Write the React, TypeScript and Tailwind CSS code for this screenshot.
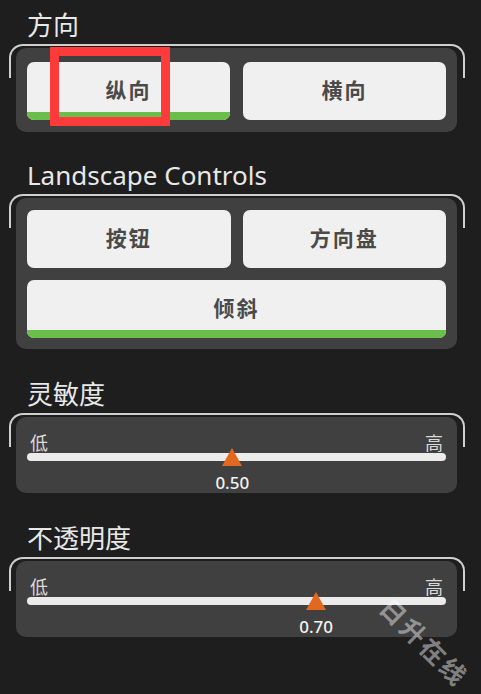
import React from 'react';

const cjk = { fontFamily: '"Noto Sans", "Noto Sans CJK SC", sans-serif' };

const Bracket = ({ children }: { children: React.ReactNode }) => (
  <div className="relative ml-[9px] w-[456px] pt-[4px] pl-[7px] pr-[8px]">
    <div className="absolute left-0 top-0 right-0 h-[34px] rounded-t-[14px] border-t-2 border-l-2 border-r-2 border-[#cfcfcf]" />
    <div className="relative rounded-[10px] bg-[#404040]">{children}</div>
  </div>
);

const Title = ({ text }: { text: string }) => (
  <div className="h-[34px] pl-[27px] text-[26px] leading-[30px] text-[#e8e8e8]">{text}</div>
);

const Btn = ({ label, active, wide }: { label: string; active?: boolean; wide?: boolean }) => (
  <div
    className={`relative flex h-[58px] items-center justify-center overflow-hidden rounded-[7px] bg-[#f0f0f0] ${wide ? 'col-span-2' : ''}`}
  >
    <span className="text-[21px] font-bold tracking-[2px] text-[#4a4a4a]">{label}</span>
    {active && <div className="absolute bottom-0 left-0 right-0 h-[8px] bg-[#6abf4b]" />}
  </div>
);

const Slider = ({ value }: { value: number }) => (
  <div className="h-[76px] px-[11px] pt-[17px]">
    <div className="flex h-[19px] items-end justify-between px-[3px] text-[18px] leading-[19px] text-[#dadada]">
      <span>低</span>
      <span>高</span>
    </div>
    <div className="relative">
      <div className="h-[8px] rounded-full bg-[#ebebeb]" />
      <div className="absolute top-[-5px]" style={{ left: `${value * 100 - 1}%` }}>
        <svg width="20" height="18" viewBox="0 0 20 18" className="-ml-[10px]">
          <polygon points="10,0 20,18 0,18" fill="#e0691f" />
        </svg>
        <div className="absolute left-0 top-[22px] -translate-x-1/2 text-[17px] font-medium text-[#f2f2f2]">
          {value.toFixed(2)}
        </div>
      </div>
    </div>
  </div>
);

export default function App() {
  return (
    <div className="relative h-[694px] w-[481px] overflow-hidden bg-[#1e1e1e] pt-[10px]" style={cjk}>
      <Title text="方向" />
      <Bracket>
        <div className="grid grid-cols-2 gap-[13px] px-[11px] pt-[14px] pb-[12px]">
          <Btn label="纵向" active />
          <Btn label="横向" />
        </div>
      </Bracket>

      <div className="mt-[28px]">
        <Title text="Landscape Controls" />
      </div>
      <Bracket>
        <div className="grid grid-cols-2 gap-[12px] px-[11px] pt-[12px] pb-[11px]">
          <Btn label="按钮" />
          <Btn label="方向盘" />
          <Btn label="倾斜" active wide />
        </div>
      </Bracket>

      <div className="mt-[30px]">
        <Title text="灵敏度" />
      </div>
      <Bracket>
        <Slider value={0.5} />
      </Bracket>

      <div className="mt-[30px]">
        <Title text="不透明度" />
      </div>
      <Bracket>
        <Slider value={0.7} />
      </Bracket>

      {/* highlight box */}
      <div className="absolute left-[50px] top-[47px] h-[79px] w-[120px] border-[9px] border-[#ff3a3a]" />

      {/* watermark */}
      <div className="absolute left-[368px] top-[624px] rotate-45 whitespace-nowrap text-[25px] font-bold tracking-[3px] text-white/45">
        日升在线
      </div>
    </div>
  );
}
